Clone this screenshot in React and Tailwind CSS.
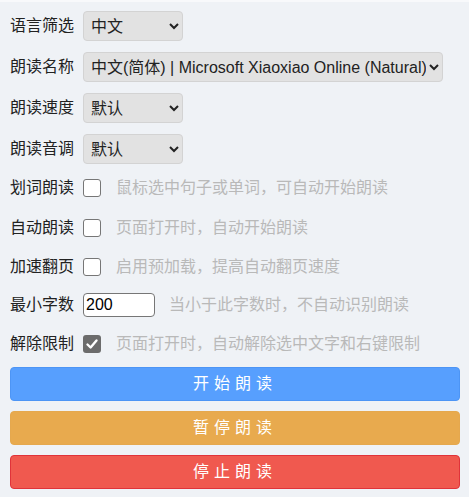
const font = { fontFamily: '"Liberation Sans", "Noto Sans CJK SC", sans-serif' };

const Select = ({ value, options, width }) => (
  <select
    defaultValue={value}
    className={`${width} h-[30px] rounded-[4px] border border-[#d3d3d3] bg-[#e2e2e2] pl-[3px] pr-0 text-[16px] text-[#222] outline-none`}
    style={font}
  >
    {options.map((o) => (
      <option key={o} value={o}>
        {o}
      </option>
    ))}
  </select>
);

const Check = ({ checked }) =>
  checked ? (
    <div className="flex h-[18px] w-[18px] items-center justify-center rounded-[3px] bg-[#6c6c6c]">
      <svg width="14" height="14" viewBox="0 0 14 14" fill="none">
        <path d="M2.5 7.5 L5.6 10.5 L11.5 3.5" stroke="white" strokeWidth="2.4" strokeLinecap="round" strokeLinejoin="round" />
      </svg>
    </div>
  ) : (
    <div className="h-[18px] w-[18px] rounded-[3px] border border-[#767676] bg-white" />
  );

const Row = ({ label, className, children }) => (
  <div className={`flex items-center ${className}`}>
    <span className="w-[73px] shrink-0 text-[16px] text-[#222]">{label}</span>
    {children}
  </div>
);

const Hint = ({ children, className = "ml-[15px]" }) => (
  <span className={`${className} text-[16px] text-[#b9b9b9]`}>{children}</span>
);

const Btn = ({ children, color, className = "mt-[10px]" }) => (
  <button
    className={`${className} h-[34px] w-[450px] rounded-[4px] border text-[16px] tracking-[5px] text-white ${color}`}
    style={font}
  >
    {children}
  </button>
);

export default function App() {
  return (
    <div className="min-h-[497px] w-[469px] border-t-2 border-[#f8f9fb] bg-[#eff2f6] pl-[10px] pt-[9px]" style={font}>
      <Row label="语言筛选" className="h-[30px]">
        <Select value="中文" options={["中文", "English"]} width="w-[100px]" />
      </Row>
      <Row label="朗读名称" className="mt-[11px] h-[30px]">
        <Select
          value="中文(简体) | Microsoft Xiaoxiao Online (Natural)"
          options={["中文(简体) | Microsoft Xiaoxiao Online (Natural)"]}
          width="w-[360px]"
        />
      </Row>
      <Row label="朗读速度" className="mt-[11px] h-[30px]">
        <Select value="默认" options={["默认"]} width="w-[100px]" />
      </Row>
      <Row label="朗读音调" className="mt-[11px] h-[30px]">
        <Select value="默认" options={["默认"]} width="w-[100px]" />
      </Row>
      <Row label="划词朗读" className="mt-[10px] h-[28px]">
        <Check />
        <Hint>鼠标选中句子或单词，可自动开始朗读</Hint>
      </Row>
      <Row label="自动朗读" className="mt-[12px] h-[28px]">
        <Check />
        <Hint>页面打开时，自动开始朗读</Hint>
      </Row>
      <Row label="加速翻页" className="mt-[11px] h-[28px]">
        <Check />
        <Hint>启用预加载，提高自动翻页速度</Hint>
      </Row>
      <Row label="最小字数" className="mt-[10px] h-[28px]">
        <input
          defaultValue="200"
          className="h-[24px] w-[72px] rounded-[4px] border border-[#767676] bg-white pl-[2px] text-[16px] text-black outline-none"
          style={font}
        />
        <Hint className="ml-[14px]">当小于此字数时，不自动识别朗读</Hint>
      </Row>
      <Row label="解除限制" className="mt-[11px] h-[28px]">
        <Check checked />
        <Hint>页面打开时，自动解除选中文字和右键限制</Hint>
      </Row>
      <div className="flex flex-col">
        <Btn className="mt-[9px]" color="bg-[#579ffe] border-[#4d95f5]">开始朗读</Btn>
        <Btn color="bg-[#e8aa4e] border-[#e5a84e]">暂停朗读</Btn>
        <Btn color="bg-[#f0594f] border-[#e0333a]">停止朗读</Btn>
      </div>
    </div>
  );
}
